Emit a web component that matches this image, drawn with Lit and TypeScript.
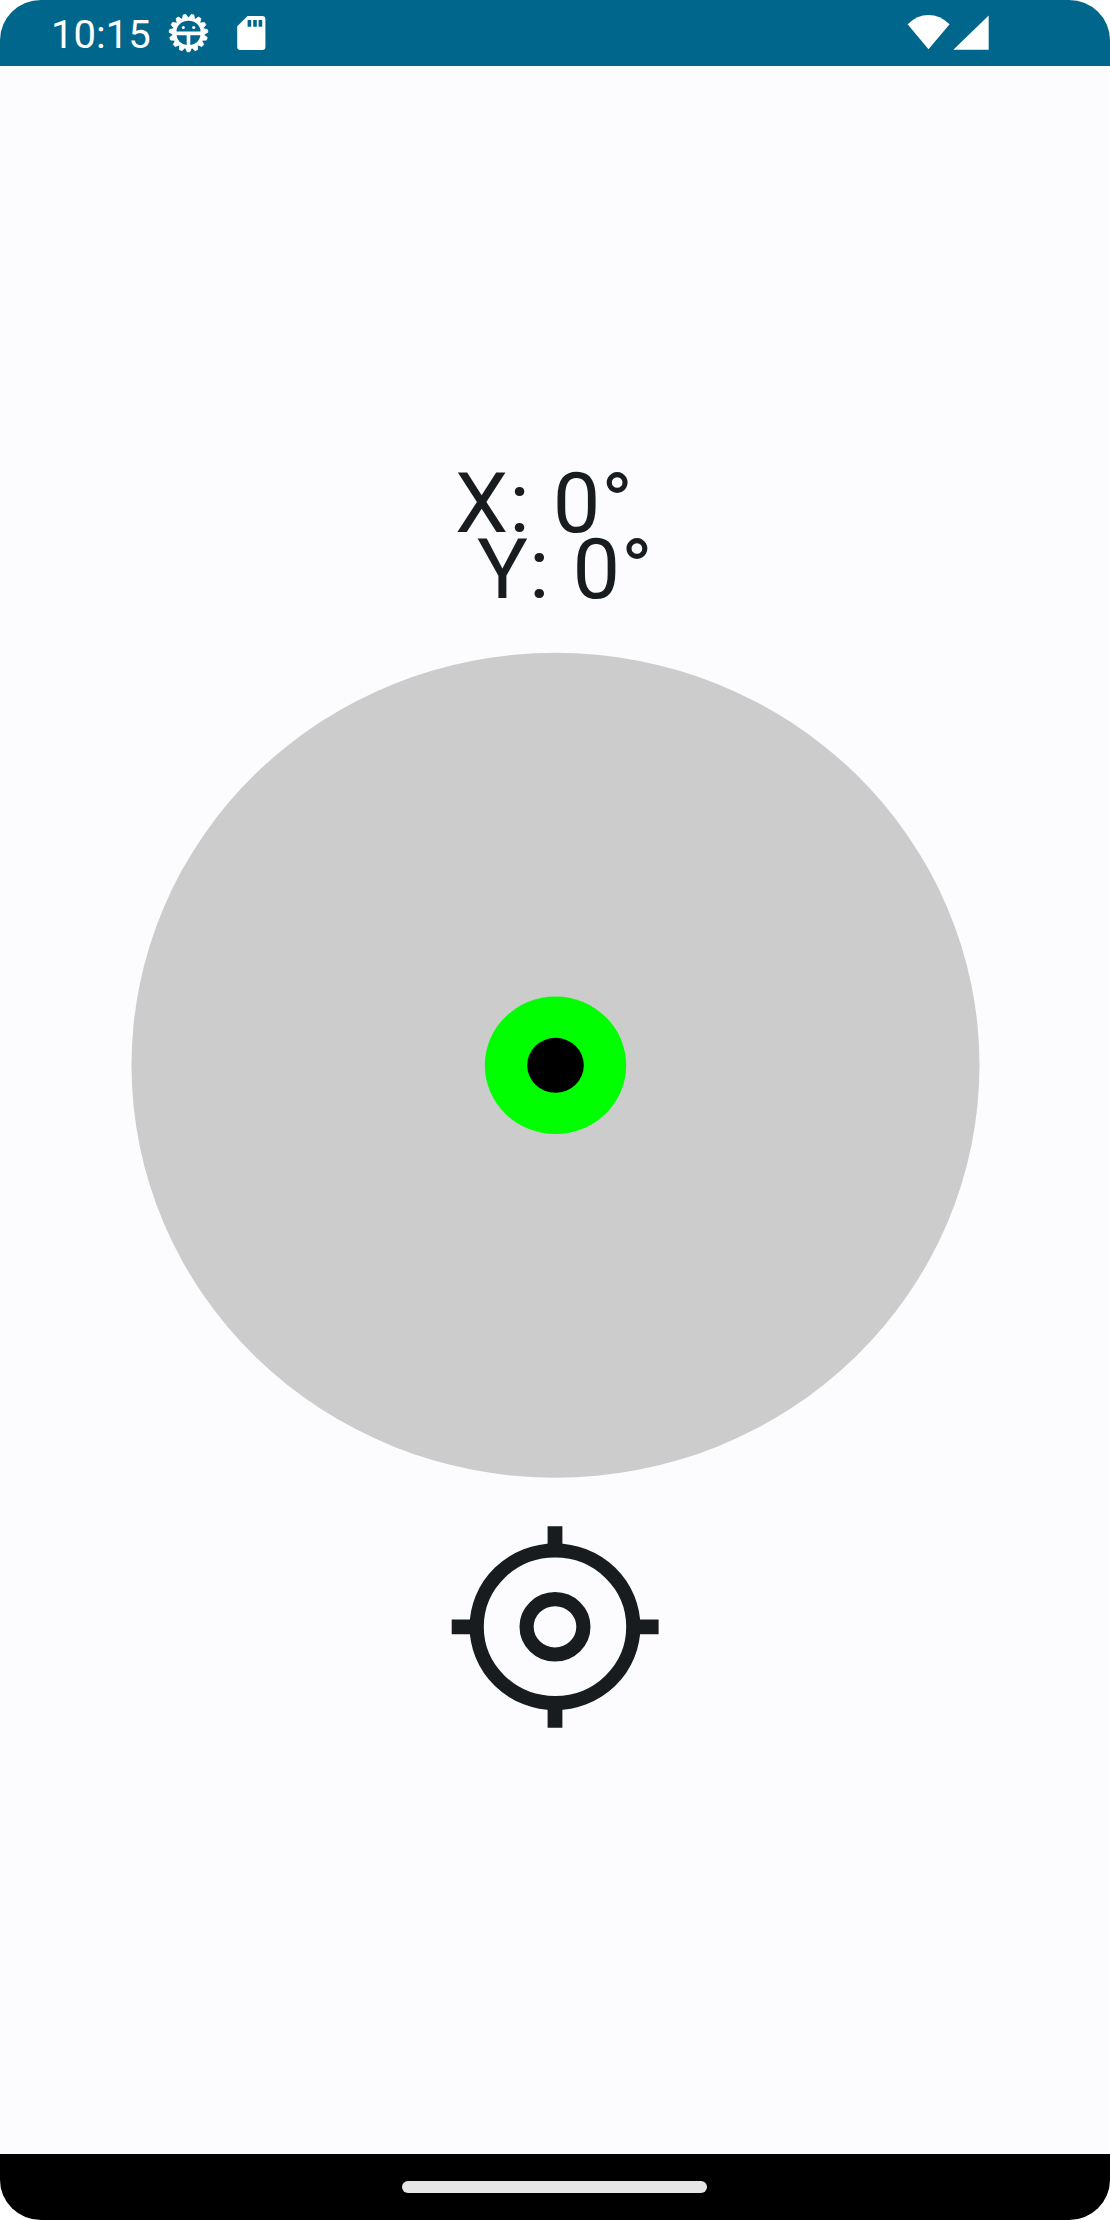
import { LitElement, html, css, svg } from "lit";
import { customElement, property } from "lit/decorators.js";

@customElement("status-bar")
class StatusBar extends LitElement {
  static styles = css`
    :host {
      display: flex;
      height: 66px;
      box-sizing: border-box;
      background: #00668b;
      color: #fff;
    }
    .clock {
      width: 112px;
      margin-left: 51px;
      font: 38.5px/70px Roboto, sans-serif;
      white-space: nowrap;
    }
    .clock span {
      display: inline-block;
      transform: scaleX(1.04);
      transform-origin: left;
    }
    .left,
    .right {
      display: block;
      flex: none;
    }
    .right {
      margin-left: auto;
    }
  `;

  render() {
    const teeth = Array.from({ length: 15 }, (_, i) => {
      const a = ((i * 24 + 90) * Math.PI) / 180;
      const at = (r: number, d: number) =>
        `${(188.5 + r * 1.028 * Math.cos(a + d)).toFixed(2)},${(33 + r * Math.sin(a + d)).toFixed(2)}`;
      return `${at(15.4, -0.18)} ${at(18.8, -0.07)} ${at(18.8, 0.07)} ${at(15.4, 0.18)}`;
    }).join(" ");
    return html`
      <div class="clock"><span>10:15</span></div>
      <svg class="left" width="117" height="66" viewBox="163 0 117 66" fill="#fff">
        ${svg`<polygon points=${teeth} stroke="#fff" stroke-width="0.8" stroke-linejoin="round"/>`}
        <g fill="#00668b">
          <path d="M176.5 31.5a12 10.8 0 0 1 24 0z" />
          <path d="M176.5 35.2h10.2v9.8q-8.8-1.4-10.2-9.8z" />
          <path d="M200.5 35.2h-10.2v9.8q8.8-1.4 10.2-9.8z" />
        </g>
        <circle cx="183.3" cy="27.6" r="1.5" />
        <circle cx="193.7" cy="27.6" r="1.5" />
        <path
          fill-rule="evenodd"
          d="M247.6 16h14.6q3.2 0 3.2 3.2v27.6q0 3.2-3.2 3.2h-21.8q-3.2 0-3.2-3.2V26.3zM247.6 20v6.7h3.6V20zM253.2 20v6.7h3.6V20zM258.6 20v6.7h3.6V20z"
        />
      </svg>
      <svg class="right" width="210" height="66" viewBox="900 0 210 66" fill="#fff">
        <path d="M907.6 24.3Q917 15 928.5 15T949.6 24.3L928.5 49.3z" />
        <path d="M988.7 15.5V49.7H953.3z" />
      </svg>
    `;
  }
}

@customElement("angle-readout")
class AngleReadout extends LitElement {
  @property() axis = "X";
  @property({ type: Number }) angle = 0;

  static styles = css`
    :host {
      display: block;
      height: 66px;
      font: 82.5px/66px Roboto, sans-serif;
      letter-spacing: 0.95px;
      color: #191c1e;
      white-space: nowrap;
    }
    .value {
      display: inline-block;
      transform: scaleX(1.0278);
      transform-origin: left;
    }
  `;

  render() {
    return html`<span class="value">${this.axis}: ${this.angle}°</span>`;
  }
}

@customElement("app-root")
class AppRoot extends LitElement {
  static styles = css`
    :host {
      display: block;
      background: #fff;
    }
    .screen {
      display: flex;
      flex-direction: column;
      width: 1110px;
      height: 2220px;
      overflow: hidden;
      border-radius: 41px / 40px;
      background: #fcfcff;
    }
    .content {
      flex: 1;
      display: flex;
      flex-direction: column;
      align-items: center;
      padding-top: 405px;
    }
    .readouts {
      align-self: stretch;
    }
    .x {
      margin-left: 454.8px;
    }
    .y {
      margin-left: 477.3px;
    }
    .level {
      display: block;
      margin-top: 49px;
    }
    .target {
      display: block;
      margin-top: 38px;
    }
    .nav {
      display: flex;
      justify-content: center;
      height: 66px;
      background: #000;
    }
    .handle {
      width: 305px;
      height: 11.5px;
      margin: 27.2px 1px 0 0;
      border-radius: 6px;
      background: #e6e6e6;
    }
  `;

  render() {
    return html`
      <div class="screen">
        <status-bar></status-bar>
        <main class="content">
          <div class="readouts">
            <angle-readout class="x" axis="X"></angle-readout>
            <angle-readout class="y" axis="Y"></angle-readout>
          </div>
          <svg class="level" width="850" height="827" viewBox="130 652 850 827">
            <ellipse cx="555.5" cy="1065.3" rx="424" ry="412.5" fill="#ccc" />
            <ellipse cx="555.5" cy="1065.3" rx="70.7" ry="68.75" fill="#0f0" />
            <ellipse cx="555.5" cy="1065.3" rx="28.3" ry="27.5" />
          </svg>
          <svg class="target" width="226" height="220" viewBox="442 1517 226 220">
            <g fill="none" stroke="#191c1e">
              <ellipse cx="555" cy="1626.8" rx="78.3" ry="76.3" stroke-width="14.2" />
              <ellipse cx="555" cy="1626.8" rx="28.4" ry="27.7" stroke-width="14.2" />
              <path
                stroke-width="14.8"
                d="M555 1526.3v20M555 1707.5v20.2M451.7 1626.8h21M638 1626.8h20.6"
              />
            </g>
          </svg>
        </main>
        <div class="nav"><div class="handle"></div></div>
      </div>
    `;
  }
}
